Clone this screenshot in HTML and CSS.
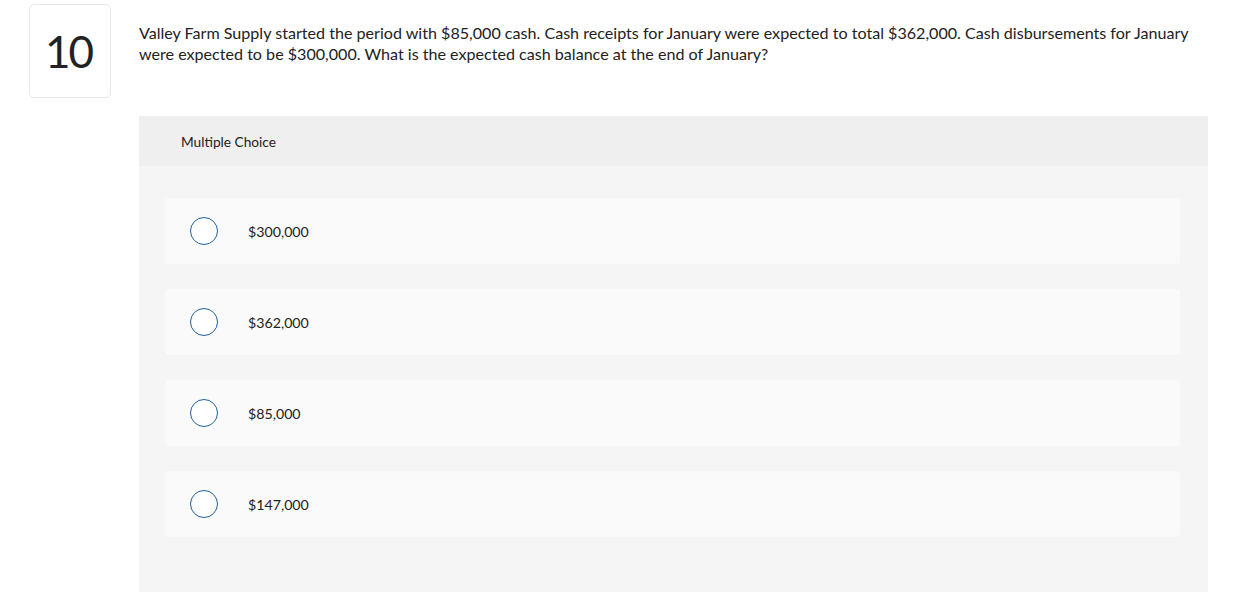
FILE: index.html
```html
<!DOCTYPE html>
<html>
<head>
<meta charset="utf-8">
<link rel="stylesheet" href="styles.css">
</head>
<body>
<div class="question">
  <div class="num-col">
    <div class="num">10</div>
  </div>
  <div class="main">
    <p class="prompt">Valley Farm Supply started the period with $85,000 cash. Cash receipts for January were expected to total $362,000. Cash disbursements for January were expected to be $300,000. What is the expected cash balance at the end of January?</p>
    <div class="panel">
      <div class="panel-head">Multiple Choice</div>
      <div class="panel-body">
        <div class="option"><span class="radio"></span><span class="label">$300,000</span></div>
        <div class="option"><span class="radio"></span><span class="label">$362,000</span></div>
        <div class="option"><span class="radio"></span><span class="label">$85,000</span></div>
        <div class="option"><span class="radio"></span><span class="label">$147,000</span></div>
      </div>
    </div>
  </div>
</div>
</body>
</html>
```
FILE: styles.css
```css
html, body {
  margin: 0;
  padding: 0;
  background: #ffffff;
}
body {
  font-family: "Lato", "Open Sans", sans-serif;
  color: #222222;
}
.question {
  display: flex;
  padding: 4px 0 0 29px;
}
.num-col {
  width: 110px;
  flex: none;
}
.num {
  width: 77px;
  height: 92px;
  border: 1px solid #e6e6e6;
  border-radius: 5px;
  display: flex;
  align-items: center;
  justify-content: center;
  font-size: 44px;
  font-weight: 400;
  color: #222;
  letter-spacing: -2px;
  padding-right: 3px;
  box-sizing: content-box;
}
.main {
  width: 1069px;
}
.prompt {
  margin: 18px 0 0 0;
  font-size: 16.1px;
  line-height: 21px;
  color: #222;
}
.panel {
  margin-top: 52px;
  background: #f5f5f5;
  border-radius: 3px 3px 0 0;
  height: 476px;
}
.panel-head {
  height: 50px;
  background: #efefef;
  display: flex;
  align-items: center;
  padding-left: 42px;
  font-size: 13.7px;
  color: #222;
}
.panel-body {
  padding: 32px 28px 0 26px;
  display: flex;
  flex-direction: column;
  gap: 25px;
}
.option {
  height: 66px;
  background: #fafafa;
  border-radius: 4px;
  display: flex;
  align-items: center;
  padding-left: 25px;
}
.radio {
  width: 26px;
  height: 26px;
  border: 1.3px solid #1f5f9e;
  border-radius: 50%;
  background: #fff;
  flex: none;
}
.label {
  margin-left: 30px;
  font-size: 14.2px;
  color: #222;
}
```
